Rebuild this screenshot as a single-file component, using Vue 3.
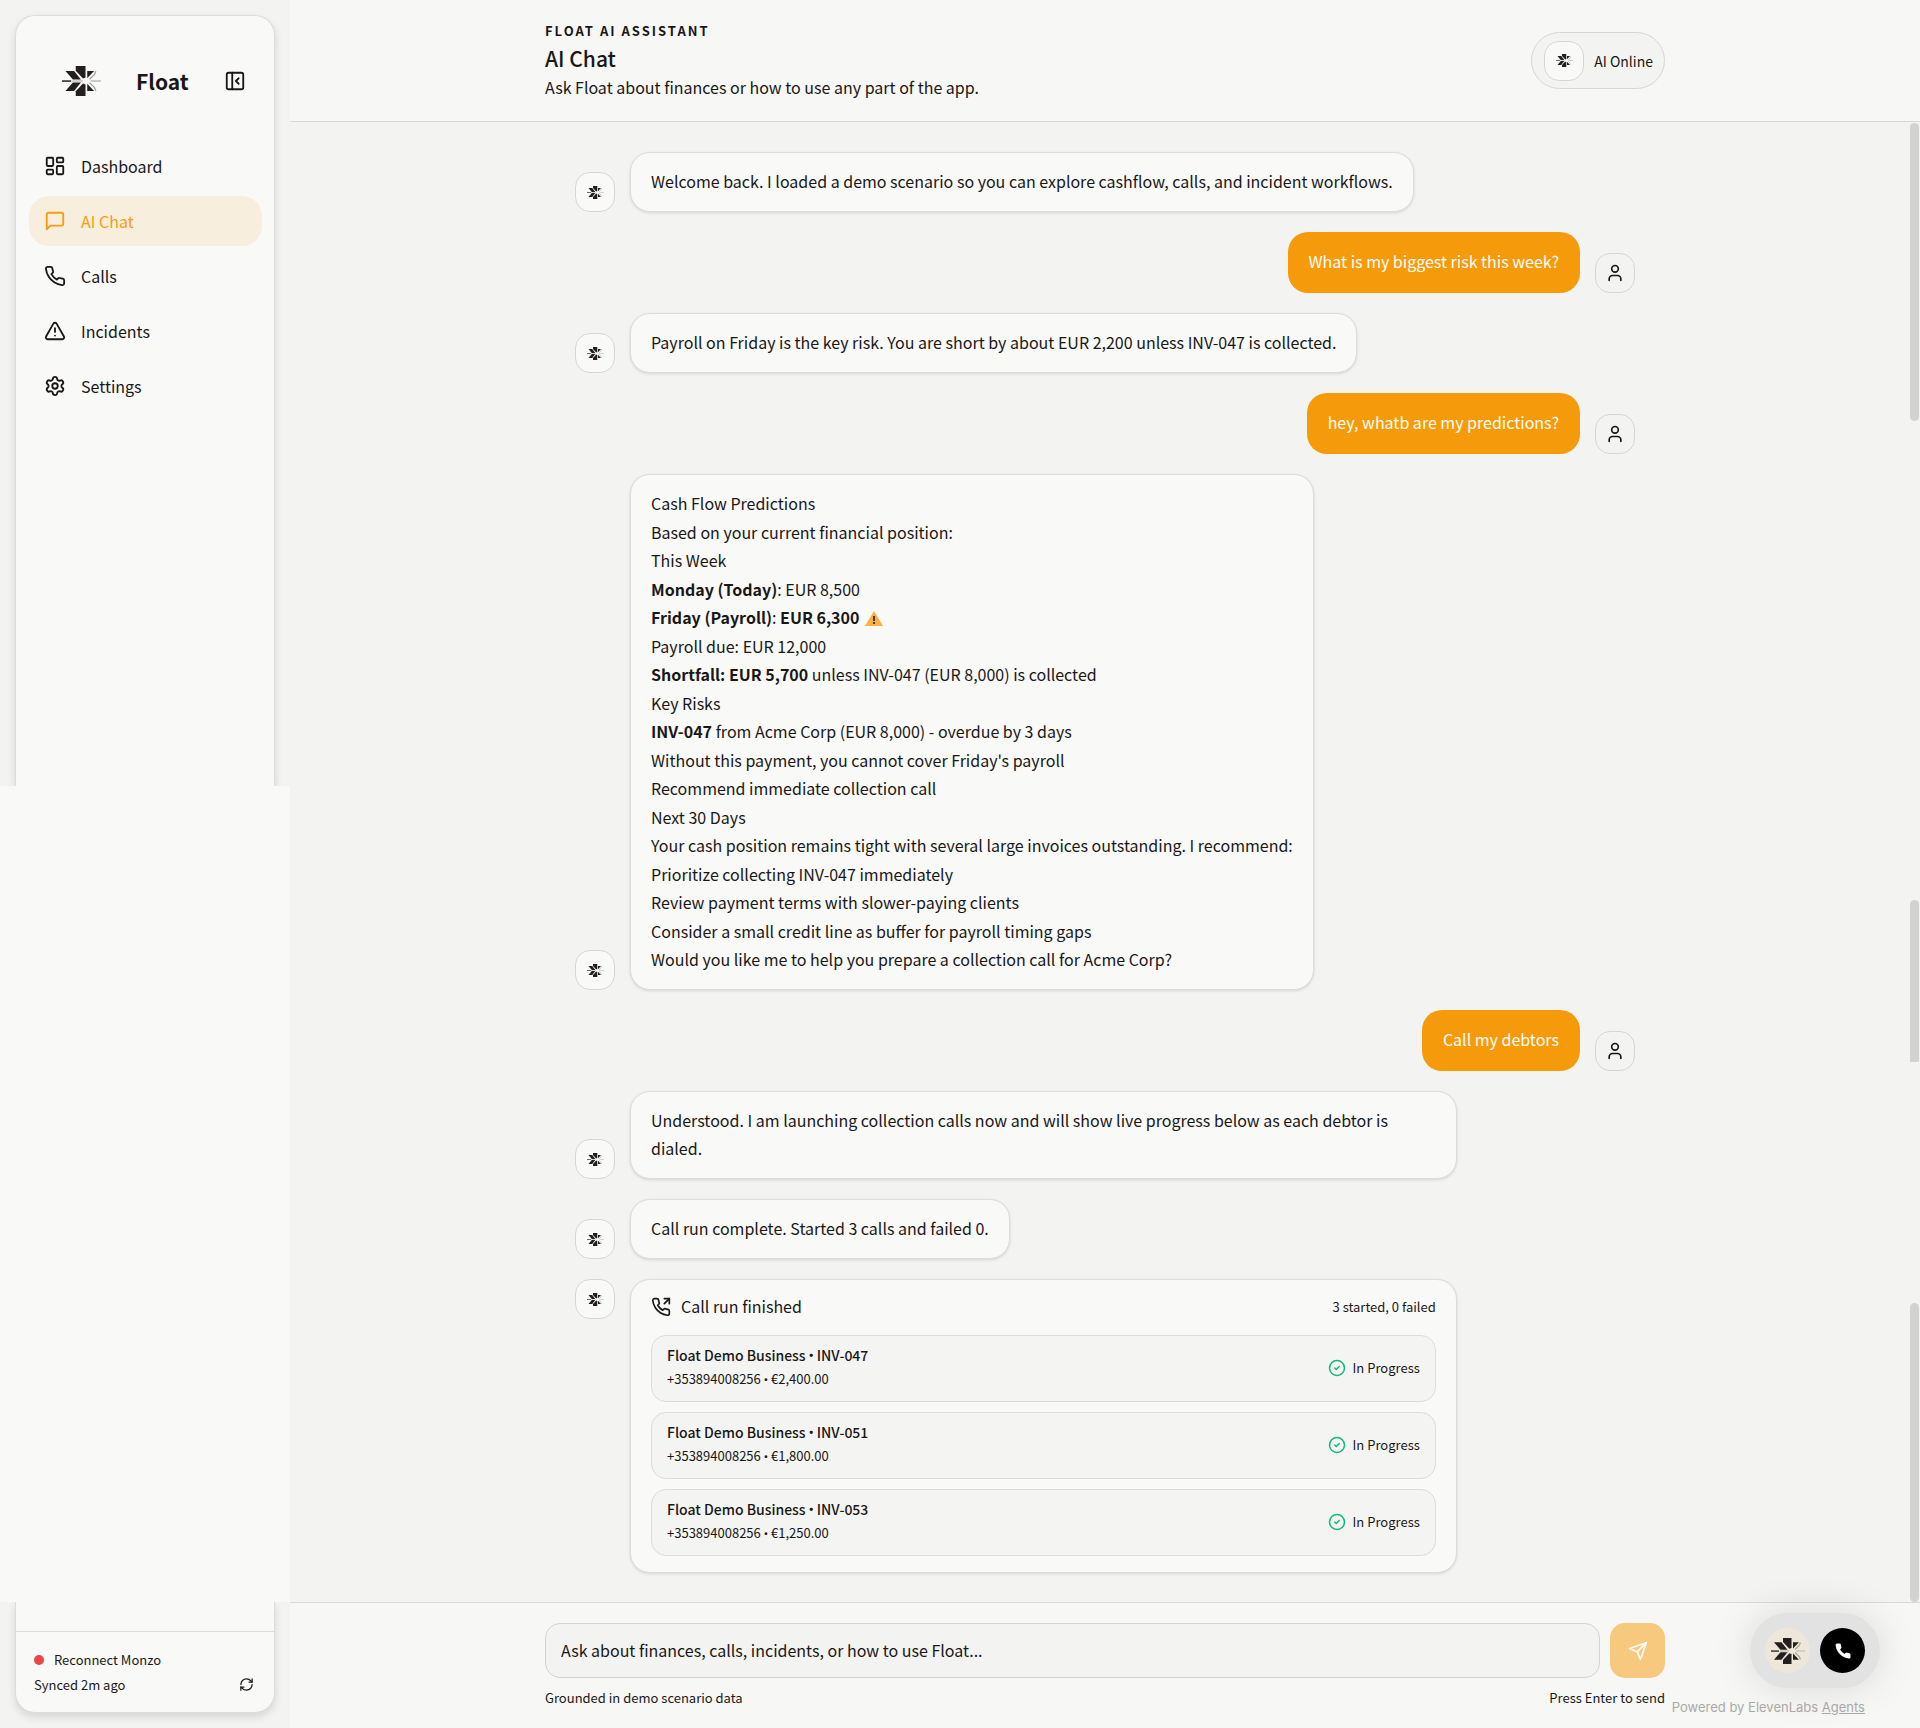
<script setup>
import { ref } from 'vue'

const navItems = [
  { label: 'Dashboard', icon: 'dashboard' },
  { label: 'AI Chat', icon: 'chat', active: true },
  { label: 'Calls', icon: 'phone' },
  { label: 'Incidents', icon: 'alert' },
  { label: 'Settings', icon: 'settings' }
]

const handset = '<path d="M22 16.92v3a2 2 0 0 1-2.18 2 19.79 19.79 0 0 1-8.63-3.07 19.5 19.5 0 0 1-6-6 19.79 19.79 0 0 1-3.07-8.67A2 2 0 0 1 4.11 2h3a2 2 0 0 1 2 1.72 12.84 12.84 0 0 0 .7 2.81 2 2 0 0 1-.45 2.11L8.09 9.91a16 16 0 0 0 6 6l1.27-1.27a2 2 0 0 1 2.11-.45 12.84 12.84 0 0 0 2.81.7A2 2 0 0 1 22 16.92z"/>'

// Lucide outlines on a 24px grid
const icons = {
  dashboard: '<rect width="7" height="9" x="3" y="3" rx="1"/><rect width="7" height="5" x="14" y="3" rx="1"/><rect width="7" height="9" x="14" y="12" rx="1"/><rect width="7" height="5" x="3" y="16" rx="1"/>',
  chat: '<path d="M21 15a2 2 0 0 1-2 2H7l-4 4V5a2 2 0 0 1 2-2h14a2 2 0 0 1 2 2z"/>',
  phone: handset,
  outgoing: '<path d="m16 8 6-6"/><path d="M22 8V2h-6"/>' + handset,
  alert: '<path d="m21.73 18-8-14a2 2 0 0 0-3.48 0l-8 14A2 2 0 0 0 4 21h16a2 2 0 0 0 1.73-3"/><path d="M12 9v4"/><path d="M12 17h.01"/>',
  settings: '<path d="M9.671 4.136a2.34 2.34 0 0 1 4.659 0 2.34 2.34 0 0 0 3.319 1.915 2.34 2.34 0 0 1 2.33 4.033 2.34 2.34 0 0 0 0 3.831 2.34 2.34 0 0 1-2.33 4.033 2.34 2.34 0 0 0-3.319 1.915 2.34 2.34 0 0 1-4.659 0 2.34 2.34 0 0 0-3.32-1.915 2.34 2.34 0 0 1-2.33-4.033 2.34 2.34 0 0 0 0-3.831A2.34 2.34 0 0 1 6.35 6.051a2.34 2.34 0 0 0 3.319-1.915"/><circle cx="12" cy="12" r="3"/>',
  panel: '<rect width="18" height="18" x="3" y="3" rx="2"/><path d="M9 3v18"/><path d="m16 15-3-3 3-3"/>',
  user: '<path d="M19 21v-2a4 4 0 0 0-4-4H9a4 4 0 0 0-4 4v2"/><circle cx="12" cy="7" r="4"/>'
}

const messages = [
  { from: 'ai', lines: ['Welcome back. I loaded a demo scenario so you can explore cashflow, calls, and incident workflows.'] },
  { from: 'user', lines: ['What is my biggest risk this week?'] },
  { from: 'ai', lines: ['Payroll on Friday is the key risk. You are short by about EUR 2,200 unless INV-047 is collected.'] },
  { from: 'user', lines: ['hey, whatb are my predictions?'] },
  {
    from: 'ai',
    lines: [
      'Cash Flow Predictions',
      'Based on your current financial position:',
      'This Week',
      '<strong>Monday (Today)</strong>: EUR 8,500',
      '<strong>Friday (Payroll)</strong>: <strong>EUR 6,300</strong> <svg class="warn" viewBox="0 0 18 15"><path d="M9 0 18 15H0z" fill="#fbb040"/><path d="M9 5v5M9 11v2" stroke="#3f3f46" stroke-width="2"/></svg>',
      'Payroll due: EUR 12,000',
      '<strong>Shortfall: EUR 5,700</strong> unless INV-047 (EUR 8,000) is collected',
      'Key Risks',
      '<strong>INV-047</strong> from Acme Corp (EUR 8,000) - overdue by 3 days',
      'Without this payment, you cannot cover Friday\'s payroll',
      'Recommend immediate collection call',
      'Next 30 Days',
      'Your cash position remains tight with several large invoices outstanding. I recommend:',
      'Prioritize collecting INV-047 immediately',
      'Review payment terms with slower-paying clients',
      'Consider a small credit line as buffer for payroll timing gaps',
      'Would you like me to help you prepare a collection call for Acme Corp?'
    ]
  },
  { from: 'user', lines: ['Call my debtors'] },
  { from: 'ai', lines: ['Understood. I am launching collection calls now and will show live progress below as each debtor is dialed.'] },
  { from: 'ai', lines: ['Call run complete. Started 3 calls and failed 0.'] }
]

const calls = [
  { invoice: 'INV-047', amount: '€2,400.00' },
  { invoice: 'INV-051', amount: '€1,800.00' },
  { invoice: 'INV-053', amount: '€1,250.00' }
]

const draft = ref('')
</script>

<template>
  <svg class="defs" aria-hidden="true">
    <symbol id="float-logo" viewBox="0 0 34 26">
      <g fill="#231f20">
        <path d="M12 0h8.500v10l-2.200.8L12 4z" />
        <path d="M12 26h8.500V16l-2.200-.8L12 22z" />
        <path d="M3 4.200h7.500l6 7.600H9.500z" />
        <path d="M3 21.800h7.500l6-7.600H9.500z" />
        <path d="M22 4.200h6l-6 6.300z" />
        <path d="M22 21.800h6l-6-6.300z" />
        <path d="M0 12.400h8v1.300H0z" />
      </g>
      <path d="M9 13h9" stroke="#a5a2a0" stroke-width=".8" />
      <path d="m29.500 4.500-1.300 3-4.200 4M29.500 21.500l-1.300-3-4.200-4" stroke="#a5a2a0" stroke-width="1.200" fill="none" />
      <path d="M25 13h9" stroke="#c6c3c0" stroke-width="1.500" />
    </symbol>
  </svg>

  <div class="app">
    <aside class="sidebar">
      <div class="rail rail-top">
        <div class="panel panel-top">
          <div class="brand">
            <svg class="brand-logo"><use href="#float-logo" /></svg>
            <span class="brand-name">Float</span>
            <button class="icon-button" aria-label="Collapse sidebar">
              <svg class="icon" viewBox="0 0 24 24" v-html="icons.panel" />
            </button>
          </div>
          <nav class="nav">
            <a v-for="item in navItems" :key="item.label" href="#" :class="['nav-link', { active: item.active }]">
              <svg class="icon" viewBox="0 0 24 24" v-html="icons[item.icon]" />
              {{ item.label }}
            </a>
          </nav>
        </div>
      </div>
      <div class="rail-fill"></div>
      <div class="rail rail-bottom">
        <div class="panel panel-bottom">
          <div class="sync">
            <a href="#" class="reconnect"><span class="dot"></span>Reconnect Monzo</a>
            <div class="sync-row">
              <span>Synced 2m ago</span>
              <button class="icon-button" aria-label="Sync now">
                <svg class="icon icon-sm" viewBox="0 0 24 24">
                  <path d="M3 12a9 9 0 0 1 9-9 9.750 9.750 0 0 1 6.740 2.740L21 8" />
                  <path d="M21 3v5h-5" />
                  <path d="M21 12a9 9 0 0 1-9 9 9.750 9.750 0 0 1-6.740-2.740L3 16" />
                  <path d="M8 16H3v5" />
                </svg>
              </button>
            </div>
          </div>
        </div>
      </div>
    </aside>

    <main class="main">
      <header class="header">
        <div class="wrap header-row">
          <div>
            <p class="eyebrow">FLOAT AI ASSISTANT</p>
            <h1>AI Chat</h1>
            <p class="subtitle">Ask Float about finances or how to use any part of the app.</p>
          </div>
          <div class="status">
            <span class="avatar"><svg class="avatar-logo"><use href="#float-logo" /></svg></span>
            AI Online
          </div>
        </div>
      </header>

      <section class="chat">
        <div class="wrap thread">
          <div v-for="(message, i) in messages" :key="i" :class="['message', message.from]">
            <span class="avatar">
              <svg v-if="message.from === 'ai'" class="avatar-logo"><use href="#float-logo" /></svg>
              <svg v-else class="icon icon-user" viewBox="0 0 24 24" v-html="icons.user" />
            </span>
            <div class="bubble">
              <p v-for="line in message.lines" :key="line" v-html="line"></p>
            </div>
          </div>

          <div class="message ai run">
            <span class="avatar"><svg class="avatar-logo"><use href="#float-logo" /></svg></span>
            <div class="bubble run-card">
              <div class="run-head">
                <span class="run-title">
                  <svg class="icon icon-run" viewBox="0 0 24 24" v-html="icons.outgoing" />
                  Call run finished
                </span>
                <span class="run-count">3 started, 0 failed</span>
              </div>
              <ul class="calls">
                <li v-for="call in calls" :key="call.invoice">
                  <div>
                    <p class="call-name">Float Demo Business <span class="bullet">•</span> {{ call.invoice }}</p>
                    <p class="call-meta">+353894008256 <span class="bullet">•</span> {{ call.amount }}</p>
                  </div>
                  <span class="call-status">
                    <svg class="icon icon-check" viewBox="0 0 24 24"><circle cx="12" cy="12" r="10" /><path d="m9 12 2 2 4-4" /></svg>
                    In Progress
                  </span>
                </li>
              </ul>
            </div>
          </div>
        </div>
        <span class="thumb thumb-a"></span>
        <span class="thumb thumb-b"></span>
        <span class="thumb thumb-c"></span>
      </section>

      <footer class="composer">
        <form class="wrap" @submit.prevent>
          <div class="composer-row">
            <input v-model="draft" type="text" aria-label="Message" placeholder="Ask about finances, calls, incidents, or how to use Float..." />
            <button class="send" aria-label="Send">
              <svg class="icon" viewBox="0 0 24 24">
                <path d="m22 2-7 20-4-9-9-4Z" />
                <path d="M22 2 11 13" />
              </svg>
            </button>
          </div>
          <div class="hints">
            <span>Grounded in demo scenario data</span>
            <span>Press Enter to send</span>
          </div>
        </form>
      </footer>

      <div class="voice">
        <div class="voice-pill">
          <span class="voice-logo"><svg><use href="#float-logo" /></svg></span>
          <button class="voice-call" aria-label="Start call">
            <svg viewBox="0 0 24 24" v-html="handset" />
          </button>
        </div>
        <p>Powered by ElevenLabs <a href="#">Agents</a></p>
      </div>
    </main>
  </div>
</template>

<style>
body {
  background: #f3f3f1;
}
</style>

<style scoped>
* {
  box-sizing: border-box;
}

p, h1, ul {
  margin: 0;
  padding: 0;
}

button {
  font: inherit;
  border: 0;
  padding: 0;
  cursor: pointer;
}

a {
  color: inherit;
  text-decoration: none;
}

.defs {
  position: absolute;
  width: 0;
  height: 0;
}

.app {
  display: grid;
  grid-template-columns: 290px 1fr;
  min-height: 100vh;
  color: #1a1817;
  font-family: "Noto Sans CJK SC", "Noto Sans", sans-serif;
  font-size: 16px;
  line-height: 28px;
}

.icon {
  width: 22px;
  height: 22px;
  fill: none;
  stroke: currentColor;
  stroke-width: 2;
  stroke-linecap: round;
  stroke-linejoin: round;
  flex: none;
}

.icon-button {
  display: flex;
  background: none;
  color: inherit;
}

/* Sidebar */
.sidebar {
  display: flex;
  flex-direction: column;
}

.rail {
  overflow: hidden;
  padding: 0 15px;
  background: #f3f3f1;
}

.rail-top {
  display: flex;
  min-height: 786px;
  padding-top: 15px;
}

.rail-fill {
  flex: 1;
  background: #f9f9f7;
}

.rail-bottom {
  padding-bottom: 15px;
}

.panel {
  width: 100%;
  background: #f9f9f7;
  border: 1px solid #dcdcda;
  box-shadow: 0 4px 8px rgba(0, 0, 0, 0.12);
}

.panel-top {
  border-bottom: 0;
  border-radius: 20px 20px 0 0;
  padding: 0 12px 0 13px;
}

.panel-bottom {
  border-top: 0;
  border-radius: 0 0 20px 20px;
  padding-top: 29px;
}

.brand {
  display: flex;
  align-items: center;
  height: 125px;
  padding: 5px 16px 0 33px;
}

.brand-logo {
  width: 39px;
  height: 30px;
}

.brand-name {
  flex: 1;
  padding-left: 35px;
  font-size: 21px;
  font-weight: 700;
}

.nav {
  display: flex;
  flex-direction: column;
  gap: 5px;
}

.nav-link {
  display: flex;
  align-items: center;
  gap: 15px;
  height: 50px;
  padding: 0 15px;
  border-radius: 20px;
}

.nav-link.active {
  background: #f8eedd;
  color: #f59e0b;
}

.sync {
  border-top: 1px solid #dcdcda;
  padding: 15px 20px 15px 18px;
  font-size: 13px;
  line-height: 25px;
}

.reconnect {
  display: flex;
  align-items: center;
  gap: 10px;
}

.dot {
  width: 10px;
  height: 10px;
  border-radius: 50%;
  background: #ef4444;
}

.sync-row {
  display: flex;
  align-items: center;
  justify-content: space-between;
}

.icon-sm {
  width: 15px;
  height: 15px;
}

/* Main column */
.main {
  position: relative;
  display: flex;
  flex-direction: column;
  min-width: 0;
}

.wrap {
  width: 100%;
  max-width: 1120px;
  margin: 0 auto;
}

.header {
  background: #f7f7f5;
  border-bottom: 1px solid #d9d9d7;
  padding: 20px 0;
}

.header-row {
  display: flex;
  align-items: center;
  justify-content: space-between;
}

.eyebrow {
  font-size: 13px;
  line-height: 22px;
  font-weight: 700;
  letter-spacing: 2px;
}

h1 {
  font-size: 21px;
  line-height: 32px;
  font-weight: 500;
}

.subtitle {
  line-height: 27px;
}

.status {
  display: flex;
  align-items: center;
  gap: 10px;
  height: 57px;
  padding: 0 11px 0 12px;
  border: 1px solid #d6d6d4;
  border-radius: 29px;
  background: #f3f3f1;
  font-size: 14px;
}

.avatar {
  display: flex;
  align-items: center;
  justify-content: center;
  flex: none;
  width: 40px;
  height: 40px;
  border: 1px solid #d6d6d4;
  border-radius: 15px;
  background: #f9f9f7;
}

.avatar-logo {
  width: 17px;
  height: 13px;
}

.chat {
  position: relative;
  flex: 1;
  padding: 30px 0 29px;
}

.thread {
  display: flex;
  flex-direction: column;
  gap: 20px;
  padding: 0 30px;
}

.message {
  display: flex;
  align-items: flex-end;
  gap: 15px;
}

.message.user {
  flex-direction: row-reverse;
}

.message.user .avatar {
  background: #f3f3f1;
}

.message.run {
  align-items: flex-start;
}

.icon-user {
  width: 20px;
  height: 20px;
}

.bubble {
  max-width: 78%;
  padding: 14px 20px 16px;
  border: 1px solid #dcdcda;
  border-radius: 20px;
  background: #f9f9f7;
  box-shadow: 0 1px 3px rgba(0, 0, 0, 0.12);
}

.bubble p:nth-child(even) {
  padding-top: 1px;
}

.user .bubble {
  padding: 15px 21px 17px;
  border: 0;
  background: #f59b0b;
  box-shadow: none;
  color: #fffdf8;
  line-height: 29px;
}

.bubble :deep(strong) {
  font-weight: 700;
}

.bubble :deep(.warn) {
  width: 18px;
  height: 15px;
  margin-left: 2px;
  vertical-align: -2px;
}

.run-card {
  width: 78%;
}

.run-head {
  display: flex;
  align-items: center;
  justify-content: space-between;
  padding-bottom: 16px;
  line-height: 25px;
}

.run-title {
  display: flex;
  align-items: center;
  gap: 10px;
}

.icon-run {
  width: 20px;
  height: 20px;
}

.run-count {
  font-size: 13px;
}

.calls {
  display: flex;
  flex-direction: column;
  gap: 10px;
  list-style: none;
}

.calls li {
  display: flex;
  align-items: center;
  justify-content: space-between;
  height: 67px;
  padding: 0 15px 2px;
  border: 1px solid #dcdcda;
  border-radius: 15px;
  background: #f4f4f2;
}

.call-name {
  font-size: 14px;
  line-height: 22px;
  font-weight: 500;
}

.call-meta {
  font-size: 13px;
  line-height: 22px;
}

.bullet {
  font-family: Roboto, sans-serif;
}

.call-status {
  display: flex;
  align-items: center;
  gap: 7px;
  font-size: 13px;
}

.icon-check {
  width: 18px;
  height: 18px;
  color: #10b981;
}

.thumb {
  position: absolute;
  right: 1px;
  width: 9px;
  border-radius: 5px;
  background: #d2d2d0;
}

.thumb-a {
  top: 1px;
  height: 298px;
}

.thumb-b {
  top: 778px;
  height: 162px;
  border-radius: 5px 5px 0 0;
}

.thumb-c {
  bottom: 0;
  height: 299px;
}

/* Composer */
.composer {
  border-top: 1px solid #d9d9d7;
  background: #f7f7f5;
  padding: 20px 0 19px;
}

.composer-row {
  display: flex;
  gap: 10px;
}

input {
  flex: 1;
  min-width: 0;
  height: 55px;
  padding: 0 15px 2px;
  border: 1px solid #d3d3d1;
  border-radius: 15px;
  background: #f3f3f1;
  color: inherit;
  font: inherit;
}

input::placeholder {
  color: #1a1817;
  opacity: 1;
}

.send {
  display: flex;
  align-items: center;
  justify-content: center;
  width: 55px;
  height: 55px;
  border-radius: 15px;
  background: #f6c97e;
  color: #fffdf8;
}

.send .icon {
  width: 20px;
  height: 20px;
}

.hints {
  display: flex;
  justify-content: space-between;
  padding-top: 9px;
  font-size: 13px;
  line-height: 22px;
}

/* Voice widget floats over the composer */
.voice {
  position: absolute;
  right: 55px;
  bottom: 12px;
  display: flex;
  flex-direction: column;
  align-items: flex-end;
  gap: 10px;
  color: #a9a9a7;
  font-family: Inter, sans-serif;
  font-size: 13px;
  line-height: 18px;
}

.voice a {
  text-decoration: underline;
}

.voice-pill {
  display: flex;
  gap: 10px;
  margin-right: -15px;
  padding: 15px;
  border-radius: 38px;
  background: #e2e2e2;
  box-shadow: 0 0 40px rgba(0, 0, 0, 0.12);
}

.voice-logo,
.voice-call {
  display: flex;
  align-items: center;
  justify-content: center;
  width: 45px;
  height: 45px;
  border-radius: 50%;
  background: #eee6d9;
}

.voice-logo svg {
  width: 34px;
  height: 26px;
}

.voice-call {
  background: #000;
}

.voice-call svg {
  width: 18px;
  height: 18px;
  fill: #fff;
}
</style>
